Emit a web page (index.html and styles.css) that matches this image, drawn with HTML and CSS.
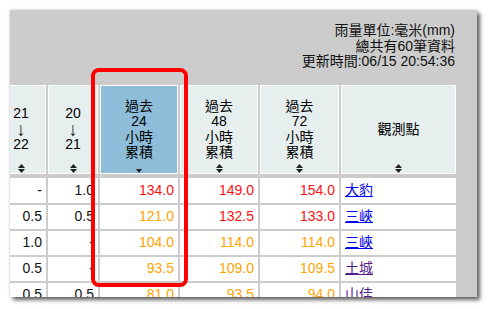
FILE: index.html
```html
<!DOCTYPE html>
<html lang="zh-Hant">
<head>
<meta charset="utf-8">
<title>雨量資料</title>
<link rel="stylesheet" href="styles.css">
</head>
<body>
<div class="frame">
  <div class="info">
    <div>雨量單位:毫米(mm)</div>
    <div>總共有60筆資料</div>
    <div>更新時間:06/15 20:54:36</div>
  </div>
  <div class="table-wrap">
    <table class="rain">
      <colgroup>
        <col class="w-hour">
        <col class="w-hour">
        <col class="w-sum">
        <col class="w-sum">
        <col class="w-sum2">
        <col class="w-station">
      </colgroup>
      <thead>
        <tr>
          <th>21<br><span class="arrow">↓</span><br>22<svg class="sort" viewBox="0 0 7 9" width="7" height="9"><path d="M0 4 L3.5 0 L7 4 Z M0 5 L7 5 L3.5 9 Z"/></svg></th>
          <th>20<br><span class="arrow">↓</span><br>21<svg class="sort" viewBox="0 0 7 9" width="7" height="9"><path d="M0 4 L3.5 0 L7 4 Z M0 5 L7 5 L3.5 9 Z"/></svg></th>
          <th class="sorted">過去<br>24<br>小時<br>累積<svg class="sort-down" viewBox="0 0 6 4" width="6" height="4"><path d="M0 0 L6 0 L3 4 Z"/></svg></th>
          <th>過去<br>48<br>小時<br>累積<svg class="sort" viewBox="0 0 7 9" width="7" height="9"><path d="M0 4 L3.5 0 L7 4 Z M0 5 L7 5 L3.5 9 Z"/></svg></th>
          <th>過去<br>72<br>小時<br>累積<svg class="sort" viewBox="0 0 7 9" width="7" height="9"><path d="M0 4 L3.5 0 L7 4 Z M0 5 L7 5 L3.5 9 Z"/></svg></th>
          <th>觀測點<svg class="sort" viewBox="0 0 7 9" width="7" height="9"><path d="M0 4 L3.5 0 L7 4 Z M0 5 L7 5 L3.5 9 Z"/></svg></th>
        </tr>
      </thead>
      <tbody>
        <tr class="first">
          <td class="num">-</td><td class="num">1.0</td>
          <td class="num red">134.0</td><td class="num red">149.0</td><td class="num red">154.0</td>
          <td class="station"><a href="#s1" class="link">大豹</a></td>
        </tr>
        <tr>
          <td class="num">0.5</td><td class="num">0.5</td>
          <td class="num orange">121.0</td><td class="num red">132.5</td><td class="num red">133.0</td>
          <td class="station"><a href="#s2" class="link">三峽</a></td>
        </tr>
        <tr>
          <td class="num">1.0</td><td class="num">-</td>
          <td class="num orange">104.0</td><td class="num orange">114.0</td><td class="num orange">114.0</td>
          <td class="station"><a href="#s3" class="link">三峽</a></td>
        </tr>
        <tr>
          <td class="num">0.5</td><td class="num">-</td>
          <td class="num orange">93.5</td><td class="num orange">109.0</td><td class="num orange">109.5</td>
          <td class="station"><a href="#s4" class="link visited">土城</a></td>
        </tr>
        <tr>
          <td class="num">0.5</td><td class="num">0.5</td>
          <td class="num orange">81.0</td><td class="num orange">93.5</td><td class="num orange">94.0</td>
          <td class="station"><a href="#s5" class="link visited">山佳</a></td>
        </tr>
      </tbody>
    </table>
  </div>
  <div class="highlight"></div>
</div>
</body>
</html>
```

FILE: styles.css
```css
html, body {
  margin: 0;
  padding: 0;
  background: #ffffff;
}

body {
  font-family: "Liberation Sans", Arial, "Noto Sans CJK TC", sans-serif;
  color: #000;
}

.frame {
  position: relative;
  margin: 10px;
  width: 467px;
  height: 287px;
  box-sizing: border-box;
  padding-top: 13px;
  background: #cccccc;
  overflow: hidden;
  box-shadow: 0 0 3px rgba(0, 0, 0, 0.18), 3px 3px 4px rgba(0, 0, 0, 0.6);
}

.info {
  text-align: right;
  padding-right: 22px;
  font-size: 14px;
  line-height: 15.5px;
  color: #111;
}

.table-wrap {
  display: flex;
  justify-content: flex-end;
  padding-right: 19px;
  margin-top: 13.5px;
}

.rain {
  flex-shrink: 0;
  width: 464px;
  table-layout: fixed;
  border-collapse: separate;
  border-spacing: 2px;
  font-size: 14px;
  line-height: 15.5px;
}

.w-hour { width: 50px; }
.w-sum { width: 78px; }
.w-sum2 { width: 79px; }
.w-station { width: 115px; }

.rain thead tr {
  height: 91px;
}

.rain th {
  position: relative;
  padding: 0;
  border: 0;
  border-bottom: 2px solid #cccccc;
  background: #e6eeee;
  background-clip: padding-box;
  box-shadow: inset 0 0 0 1px #ffffff;
  font-weight: normal;
  text-align: center;
  vertical-align: middle;
  color: #000;
}

.rain th.sorted {
  background-color: #8dbdd8;
}

.arrow {
  display: inline-block;
  height: 15.5px;
  line-height: 15.5px;
  vertical-align: top;
  font-family: "Liberation Sans", Arial, sans-serif;
  font-size: 19px;
  color: #222;
}

.sort {
  position: absolute;
  left: 50%;
  bottom: 1px;
  margin-left: -3.5px;
  fill: #222;
}

.sort-down {
  position: absolute;
  left: 50%;
  bottom: 1px;
  margin-left: -3px;
  fill: #222;
}

.rain tbody tr {
  height: 24px;
}

.rain tbody tr.first {
  height: 25px;
}

.rain td {
  background: #ffffff;
  padding: 0 4px;
  vertical-align: middle;
  white-space: nowrap;
  color: #111;
}

.num {
  text-align: right;
}

.rain td.red {
  color: #ff1010;
}

.rain td.orange {
  color: #ffa500;
}

.station {
  text-align: left;
}

.link {
  color: #0000ee;
  text-decoration: underline;
}

.link.visited {
  color: #551a8b;
}

.highlight {
  position: absolute;
  left: 81px;
  top: 58px;
  width: 97px;
  height: 219px;
  box-sizing: border-box;
  border: 4px solid #ff0000;
  border-radius: 8px;
  pointer-events: none;
}
```
